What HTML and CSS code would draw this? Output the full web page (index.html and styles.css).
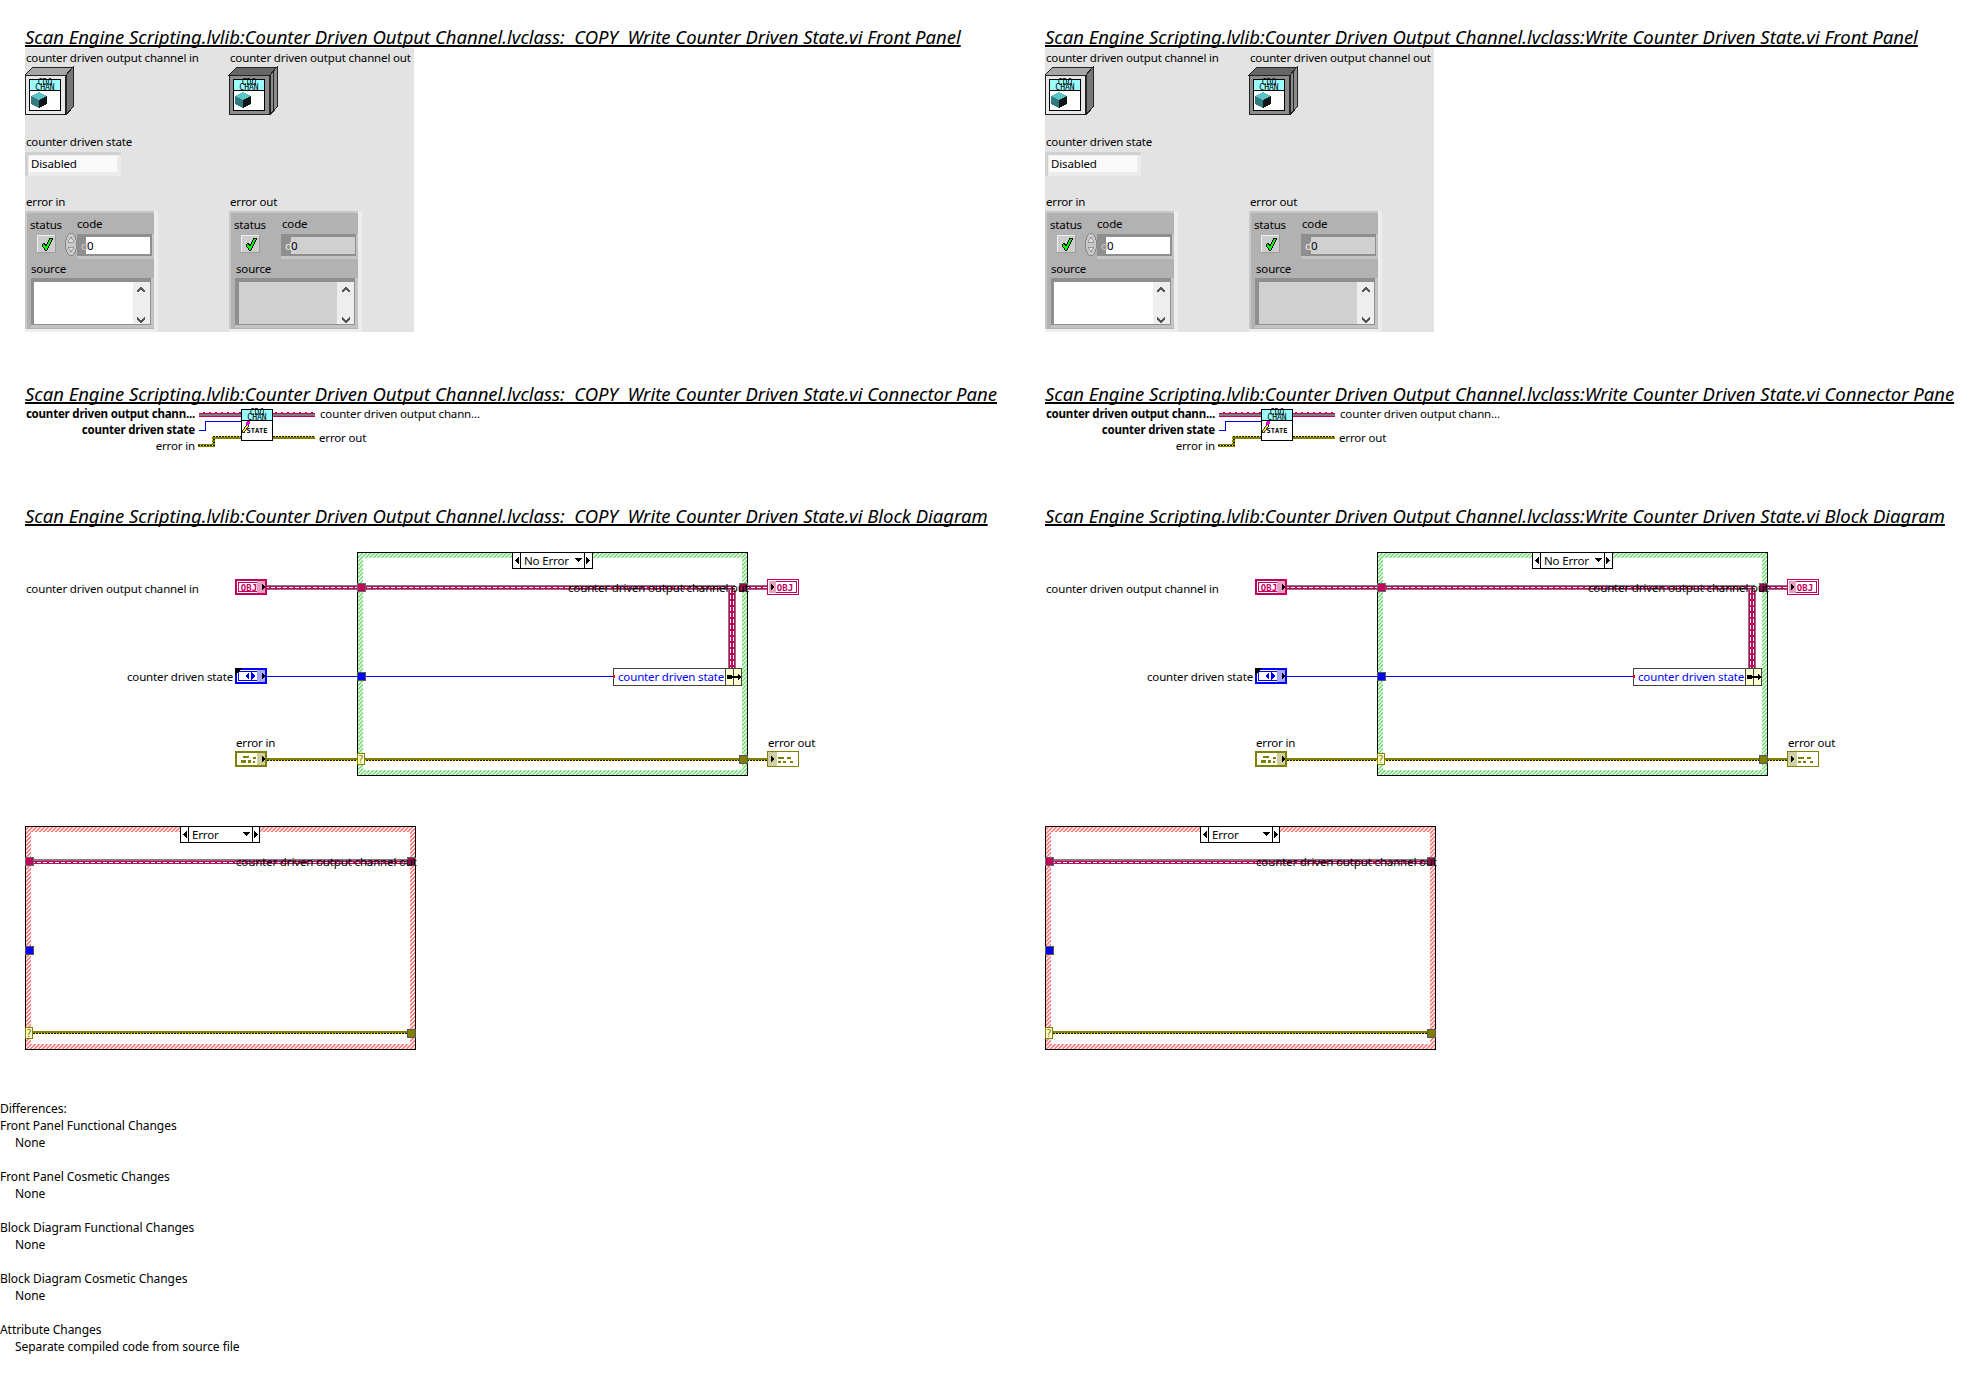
FILE: index.html
```html
<!DOCTYPE html>
<html lang="en">
<head>
<meta charset="utf-8">
<title>VI Comparison Report</title>
<link rel="stylesheet" href="styles.css">
</head>
<body>
<svg class="defs" width="0" height="0" aria-hidden="true">
  <defs>
    <pattern id="hatch-g" width="4" height="4" patternUnits="userSpaceOnUse">
      <rect width="4" height="4" fill="#e4fde4"/>
      <path d="M2 0h2v1h-2zM1 1h2v1h-2zM0 2h2v1h-2zM0 3h1v1h-1zM3 3h1v1h-1z" fill="#80e080"/>
    </pattern>
    <pattern id="hatch-r" width="4" height="4" patternUnits="userSpaceOnUse">
      <rect width="4" height="4" fill="#ffe6e6"/>
      <path d="M2 0h2v1h-2zM1 1h2v1h-2zM0 2h2v1h-2zM0 3h1v1h-1zM3 3h1v1h-1z" fill="#ff7f7f"/>
    </pattern>
    <pattern id="wire-c" width="6" height="5" patternUnits="userSpaceOnUse">
      <rect width="6" height="5" fill="#c4005f"/>
      <rect width="6" height="1" fill="#807b7d"/>
      <rect y="4" width="6" height="1" fill="#807b7d"/>
      <rect x="1" y="2" width="4" height="1" fill="#fff"/>
    </pattern>
    <pattern id="wire-cv" width="8" height="6" patternUnits="userSpaceOnUse">
      <rect width="8" height="6" fill="#c4005f"/>
      <rect width="1" height="6" fill="#807b7d"/>
      <rect x="7" width="1" height="6" fill="#807b7d"/>
      <rect x="2" y="1" width="1" height="4" fill="#fff"/>
      <rect x="5" y="1" width="1" height="4" fill="#fff"/>
    </pattern>
    <pattern id="wire-e" width="3" height="3" patternUnits="userSpaceOnUse">
      <rect width="3" height="3" fill="#808000"/>
      <rect y="1" width="2" height="1" fill="#141400"/>
      <rect x="2" y="1" width="1" height="1" fill="#ffff00"/>
    </pattern>

    <symbol id="chev-up" viewBox="0 0 8 6">
      <path d="M0 5l4-4 4 4" fill="none" stroke="#555" stroke-width="2"/>
    </symbol>
    <symbol id="chev-down" viewBox="0 0 8 6">
      <path d="M0 1l4 4 4-4" fill="none" stroke="#555" stroke-width="2"/>
    </symbol>

    <symbol id="cube" viewBox="31 93 16 16">
      <path d="M39 93l8 4-8 4-8-4z" fill="#5cc4c4"/>
      <path d="M31 97l8 4v8l-8-4z" fill="#2f7b80"/>
      <path d="M39 101l8-4v8l-8 4z" fill="#101818"/>
    </symbol>

    <symbol id="ok-btn" viewBox="0 0 19 18">
      <rect width="19" height="18" fill="#9c9c9c"/>
      <rect width="18" height="17" fill="#eeeeee"/>
      <rect x="1" y="1" width="17" height="16" fill="#cdcdcd"/>
      <path d="M5 10l2-2 2 3 4-8h3l-6 12h-2z" fill="#00ff00" stroke="#000"/>
    </symbol>

    <symbol id="err-base" viewBox="0 0 133 121">
      <rect width="133" height="121" fill="#ededed"/>
      <rect width="129" height="118" fill="#b2b2b2"/>
      <rect width="129" height="2" fill="#c8c8c8"/>
      <rect y="0" width="2" height="118" fill="#c8c8c8"/>
      <rect x="52" y="23" width="77" height="24" fill="#8f8f8f"/>
      <rect x="52" y="45" width="77" height="3" fill="#c4c4c4"/>
      <rect x="127" y="23" width="2" height="24" fill="#c4c4c4"/>
      <rect x="6" y="67" width="123" height="50" fill="#8f8f8f"/>
      <rect x="6" y="114" width="123" height="3" fill="#c4c4c4"/>
      <rect x="126" y="67" width="3" height="50" fill="#c4c4c4"/>
    </symbol>

    <symbol id="fp" viewBox="25 48 389 284">
      <!-- class control -->
      <path d="M25 75l8-8h40l-7 8z" fill="#a6a6a6" stroke="#222"/>
      <path d="M66 75l7-8v40l-7 8z" fill="#777" stroke="#222"/>
      <rect x="25.500" y="75.500" width="40" height="39" fill="#e8e8e8" stroke="#222"/>
      <rect x="29.500" y="79.500" width="31" height="31" fill="#fff" stroke="#000"/>
      <rect x="30" y="80" width="30" height="10" fill="#99ffff"/>
      <rect x="30" y="90" width="30" height="1" fill="#000"/>
      <text class="tiny" x="45" y="85">CDO</text>
      <text class="tiny" x="45" y="90">CHAN</text>
      <use href="#cube" x="31" y="92" width="16" height="16"/>

      <!-- class indicator -->
      <path d="M229 75l8-8h40l-7 8z" fill="#666" stroke="#222"/>
      <path d="M270 75l7-8v40l-7 8z" fill="#8c8c8c" stroke="#222"/>
      <path d="M273 71v40" stroke="#222"/>
      <rect x="229.500" y="75.500" width="40" height="39" fill="#8c8c8c" stroke="#222"/>
      <rect x="233.500" y="79.500" width="31" height="31" fill="#fff" stroke="#000"/>
      <rect x="234" y="80" width="30" height="10" fill="#99ffff"/>
      <rect x="234" y="90" width="30" height="1" fill="#000"/>
      <text class="tiny" x="249" y="85">CDO</text>
      <text class="tiny" x="249" y="90">CHAN</text>
      <use href="#cube" x="235" y="92" width="16" height="16"/>

      <!-- ring -->
      <rect x="25" y="152" width="96" height="24" fill="#ececec"/>
      <rect x="25" y="152" width="96" height="3" fill="#d2d2d2"/>
      <rect x="25" y="152" width="3" height="24" fill="#d2d2d2"/>
      <rect x="29" y="156" width="88" height="16" fill="#fafafa"/>

      <!-- error in -->
      <use href="#err-base" x="25" y="211" width="133" height="121"/>
      <rect x="86" y="237" width="64" height="17" fill="#fff"/>
      <rect x="34" y="282" width="116" height="42" fill="#fff"/>
      <rect x="133" y="282" width="17" height="42" fill="#eeeeee"/>
      <use href="#chev-up" x="137" y="287" width="8" height="6"/>
      <use href="#chev-down" x="137" y="317" width="8" height="6"/>
      <ellipse cx="71" cy="244.500" rx="5.500" ry="11.500" fill="#c8c8c8" stroke="#888"/>
      <path d="M71 237l-3 5h6zM71 252l-3-5h6z" fill="#ddd" stroke="#777" stroke-width=".6"/>
      <use href="#ok-btn" x="37" y="235" width="19" height="18"/>

      <!-- error out -->
      <use href="#err-base" x="229" y="211" width="133" height="121"/>
      <rect x="291" y="237" width="64" height="17" fill="#d0d0d0"/>
      <rect x="239" y="282" width="115" height="42" fill="#d0d0d0"/>
      <rect x="337" y="282" width="17" height="42" fill="#eeeeee"/>
      <use href="#chev-up" x="342" y="287" width="8" height="6"/>
      <use href="#chev-down" x="342" y="317" width="8" height="6"/>
      <use href="#ok-btn" x="241" y="235" width="19" height="18"/>
    </symbol>

    <symbol id="pane" viewBox="25 405 389 98">
      <rect x="199" y="412" width="42" height="5" fill="url(#wire-c)"/>
      <rect x="273" y="412" width="42" height="5" fill="url(#wire-c)"/>
      <path d="M199 430.500h6.500v-9h35.500" fill="none" stroke="#0000e0" stroke-width="1"/>
      <path d="M198 444h14v-8h29v3h-26v8h-17z" fill="url(#wire-e)"/>
      <rect x="273" y="436" width="42" height="3" fill="url(#wire-e)"/>
      <rect x="241.500" y="409.500" width="31" height="31" fill="#fff" stroke="#000"/>
      <rect x="242" y="410" width="30" height="10" fill="#99ffff"/>
      <rect x="242" y="420" width="30" height="1" fill="#000"/>
      <text class="tiny" x="257" y="415">CDO</text>
      <text class="tiny" x="257" y="420">CHAN</text>
      <path d="M242 432l5-8 2 1-5 8z" fill="#ffee44" stroke="#000" stroke-width=".8"/>
      <circle cx="248" cy="423" r="2" fill="#e000d0"/>
      <text class="state" x="257" y="433">STATE</text>
    </symbol>

    <symbol id="t-obj-in" viewBox="0 0 32 16">
      <rect width="32" height="16" fill="#c4005f"/>
      <rect x="2" y="2" width="28" height="12" fill="#fff"/>
      <rect x="3.500" y="3.500" width="22" height="9" fill="#fff" stroke="#c4005f"/>
      <text class="obj" x="14" y="11.500">OBJ</text>
      <rect x="22" y="2" width="8" height="12" fill="#e8a0c0"/>
      <path d="M27 5l3 3-3 3z" fill="#000"/>
    </symbol>
    <symbol id="t-obj-out" viewBox="0 0 32 16">
      <rect x=".5" y=".5" width="31" height="15" fill="#fff" stroke="#c4005f"/>
      <rect x="2.500" y="2.500" width="27" height="11" fill="#fff" stroke="#c4005f"/>
      <text class="obj" x="18" y="11.500">OBJ</text>
      <rect x="2" y="2" width="7" height="12" fill="#e8a0c0"/>
      <path d="M4 5l3 3-3 3z" fill="#000"/>
    </symbol>
    <symbol id="t-enum" viewBox="0 0 32 16">
      <rect width="32" height="16" fill="#0000ff"/>
      <rect x="2" y="2" width="28" height="12" fill="#fff"/>
      <rect x="3.500" y="3.500" width="20" height="9" fill="#fff" stroke="#0000ff"/>
      <path d="M14 4v8l-4-4zM16 4l4 4-4 4z" fill="#0000ff"/>
      <rect x="22" y="2" width="8" height="12" fill="#a8a8f0"/>
      <path d="M27 5l3 3-3 3z" fill="#000"/>
      <path d="M0 0h8l-8 7z" fill="#000"/>
    </symbol>
    <symbol id="t-err-in" viewBox="0 0 32 16">
      <rect width="32" height="16" fill="#808000"/>
      <rect x="2" y="2" width="28" height="12" fill="#fff"/>
      <path d="M8 5h6v2h-6zM6 9h5v3h-5zM13 9h3v3h-3zM18 6h3v2h-3zM18 10h2v2h-2z" fill="#808000"/>
      <rect x="22" y="2" width="8" height="12" fill="#cfcfa0"/>
      <path d="M27 5l3 3-3 3z" fill="#000"/>
    </symbol>
    <symbol id="t-err-out" viewBox="0 0 32 16">
      <rect x=".5" y=".5" width="31" height="15" fill="#fff" stroke="#808000"/>
      <rect x="1" y="1" width="9" height="14" fill="#cfcfa0"/>
      <path d="M4 5l3 3-3 3z" fill="#000"/>
      <path d="M11 6h6v2h-6zM11 10h3v2h-3zM16 10h3v2h-3zM20 6h4v2h-4zM23 10h3v2h-3z" fill="#808000"/>
    </symbol>

    <symbol id="bd" viewBox="25 527 800 533">
      <!-- no error case -->
      <rect x="357.500" y="552.500" width="390" height="223" fill="url(#hatch-g)" stroke="#000"/>
      <rect x="363" y="558" width="379" height="212" fill="#fff"/>

      <rect x="267" y="585" width="468" height="5" fill="url(#wire-c)"/>
      <rect x="748" y="585" width="19" height="5" fill="url(#wire-c)"/>
      <rect x="728" y="590" width="8" height="78" fill="url(#wire-cv)"/>
      <rect x="267" y="676" width="346" height="1" fill="#0000ff"/>
      <rect x="267" y="758" width="472" height="3" fill="url(#wire-e)"/>
      <rect x="748" y="758" width="19" height="3" fill="url(#wire-e)"/>

      <rect x="357.500" y="583.500" width="8" height="8" fill="#c4005f" stroke="#666"/>
      <rect x="739.500" y="583.500" width="8" height="8" fill="#8b0e4b" stroke="#666"/>
      <rect x="357.500" y="672.500" width="8" height="8" fill="#0000ff" stroke="#555"/>
      <rect x="357.500" y="753.500" width="7" height="11" fill="#ffffc8" stroke="#808000"/>
      <text class="q" x="361" y="763">?</text>
      <rect x="739.500" y="755.500" width="8" height="8" fill="#808000" stroke="#555"/>

      <use href="#t-obj-in" x="235" y="579" width="32" height="16"/>
      <use href="#t-enum" x="235" y="668" width="32" height="16"/>
      <use href="#t-err-in" x="235" y="751" width="32" height="16"/>
      <use href="#t-obj-out" x="767" y="579" width="32" height="16"/>
      <use href="#t-err-out" x="767" y="751" width="32" height="16"/>

      <rect x="512.500" y="552.500" width="80" height="16" fill="#fff" stroke="#000"/>
      <path d="M520.500 552v17M584.500 552v17" stroke="#000"/>
      <path d="M519 557v7l-4-3.500zM586 557v7l4-3.500zM575 558h7l-3.500 4z" fill="#000"/>

      <rect x="613.500" y="668.500" width="128" height="17" fill="#fff" stroke="#444"/>
      <rect x="725.500" y="668.500" width="8" height="17" fill="#ffffcc" stroke="#444"/>
      <rect x="733.500" y="668.500" width="8" height="17" fill="#ffffcc" stroke="#444"/>
      <rect x="727" y="675" width="5" height="4" rx="1" fill="#000"/>
      <path d="M732 676h6v-2l3 3-3 3v-2h-6z" fill="#000"/>
      <rect x="613" y="675" width="2" height="3" fill="#ff0000"/>

      <!-- error case -->
      <rect x="25.500" y="826.500" width="390" height="223" fill="url(#hatch-r)" stroke="#000"/>
      <rect x="31" y="832" width="379" height="212" fill="#fff"/>
      <rect x="34" y="859" width="373" height="5" fill="url(#wire-c)"/>
      <rect x="33" y="1031" width="374" height="3" fill="url(#wire-e)"/>
      <rect x="25.500" y="857.500" width="8" height="8" fill="#c4005f" stroke="#666"/>
      <rect x="407.500" y="857.500" width="8" height="8" fill="#8b0e4b" stroke="#666"/>
      <rect x="25.500" y="946.500" width="8" height="8" fill="#0000ff" stroke="#555"/>
      <rect x="25.500" y="1027.500" width="7" height="11" fill="#ffffc8" stroke="#808000"/>
      <text class="q" x="29" y="1037">?</text>
      <rect x="407.500" y="1029.500" width="8" height="8" fill="#808000" stroke="#555"/>
      <rect x="180.500" y="826.500" width="79" height="16" fill="#fff" stroke="#000"/>
      <path d="M188.500 826v17M252.500 826v17" stroke="#000"/>
      <path d="M187 831v7l-4-3.500zM254 831v7l4-3.500zM243 832h7l-3.500 4z" fill="#000"/>
    </symbol>
  </defs>
</svg>

<main class="compare">
  <article class="col">
    <h2 class="title">Scan Engine Scripting.lvlib:Counter Driven Output Channel.lvclass:  COPY  Write Counter Driven State.vi Front Panel</h2>
    <div class="panel">
      <svg class="art"><use href="#fp"/></svg>
      <span class="lbl fp-cin">counter driven output channel in</span>
      <span class="lbl fp-cout">counter driven output channel out</span>
      <span class="lbl fp-state">counter driven state</span>
      <span class="lbl fp-dis">Disabled</span>
      <span class="lbl fp-ein">error in</span>
      <span class="lbl fp-eout">error out</span>
      <span class="lbl fp-s1">status</span>
      <span class="lbl fp-c1">code</span>
      <span class="lbl fp-d1">d</span>
      <span class="lbl fp-z1">0</span>
      <span class="lbl fp-src1">source</span>
      <span class="lbl fp-s2">status</span>
      <span class="lbl fp-c2">code</span>
      <span class="lbl fp-d2">d</span>
      <span class="lbl fp-z2">0</span>
      <span class="lbl fp-src2">source</span>
    </div>
    <h2 class="title title-gap">Scan Engine Scripting.lvlib:Counter Driven Output Channel.lvclass:  COPY  Write Counter Driven State.vi Connector Pane</h2>
    <div class="conn">
      <svg class="art"><use href="#pane"/></svg>
      <span class="lbl cp-l1">counter driven output chann...</span>
      <span class="lbl cp-l2">counter driven state</span>
      <span class="lbl cp-l3">error in</span>
      <span class="lbl cp-r1">counter driven output chann...</span>
      <span class="lbl cp-r2">error out</span>
    </div>
    <h2 class="title">Scan Engine Scripting.lvlib:Counter Driven Output Channel.lvclass:  COPY  Write Counter Driven State.vi Block Diagram</h2>
    <div class="diagram">
      <svg class="art"><use href="#bd"/></svg>
      <span class="lbl bd-cin">counter driven output channel in</span>
      <span class="lbl bd-state">counter driven state</span>
      <span class="lbl bd-ein">error in</span>
      <span class="lbl bd-eout">error out</span>
      <span class="lbl bd-sel1">No Error</span>
      <span class="lbl bd-cout">counter driven output channel out</span>
      <span class="lbl bd-prop">counter driven state</span>
      <span class="lbl bd-sel2">Error</span>
      <span class="lbl bd-cout2">counter driven output channel out</span>
    </div>
  </article>

  <article class="col">
    <h2 class="title">Scan Engine Scripting.lvlib:Counter Driven Output Channel.lvclass:Write Counter Driven State.vi Front Panel</h2>
    <div class="panel">
      <svg class="art"><use href="#fp"/></svg>
      <span class="lbl fp-cin">counter driven output channel in</span>
      <span class="lbl fp-cout">counter driven output channel out</span>
      <span class="lbl fp-state">counter driven state</span>
      <span class="lbl fp-dis">Disabled</span>
      <span class="lbl fp-ein">error in</span>
      <span class="lbl fp-eout">error out</span>
      <span class="lbl fp-s1">status</span>
      <span class="lbl fp-c1">code</span>
      <span class="lbl fp-d1">d</span>
      <span class="lbl fp-z1">0</span>
      <span class="lbl fp-src1">source</span>
      <span class="lbl fp-s2">status</span>
      <span class="lbl fp-c2">code</span>
      <span class="lbl fp-d2">d</span>
      <span class="lbl fp-z2">0</span>
      <span class="lbl fp-src2">source</span>
    </div>
    <h2 class="title title-gap">Scan Engine Scripting.lvlib:Counter Driven Output Channel.lvclass:Write Counter Driven State.vi Connector Pane</h2>
    <div class="conn">
      <svg class="art"><use href="#pane"/></svg>
      <span class="lbl cp-l1">counter driven output chann...</span>
      <span class="lbl cp-l2">counter driven state</span>
      <span class="lbl cp-l3">error in</span>
      <span class="lbl cp-r1">counter driven output chann...</span>
      <span class="lbl cp-r2">error out</span>
    </div>
    <h2 class="title">Scan Engine Scripting.lvlib:Counter Driven Output Channel.lvclass:Write Counter Driven State.vi Block Diagram</h2>
    <div class="diagram">
      <svg class="art"><use href="#bd"/></svg>
      <span class="lbl bd-cin">counter driven output channel in</span>
      <span class="lbl bd-state">counter driven state</span>
      <span class="lbl bd-ein">error in</span>
      <span class="lbl bd-eout">error out</span>
      <span class="lbl bd-sel1">No Error</span>
      <span class="lbl bd-cout">counter driven output channel out</span>
      <span class="lbl bd-prop">counter driven state</span>
      <span class="lbl bd-sel2">Error</span>
      <span class="lbl bd-cout2">counter driven output channel out</span>
    </div>
  </article>
</main>

<section class="notes">
  <p>Differences:</p>
  <div class="group"><p>Front Panel Functional Changes</p><p class="ind">None</p></div>
  <div class="group"><p>Front Panel Cosmetic Changes</p><p class="ind">None</p></div>
  <div class="group"><p>Block Diagram Functional Changes</p><p class="ind">None</p></div>
  <div class="group"><p>Block Diagram Cosmetic Changes</p><p class="ind">None</p></div>
  <div class="group"><p>Attribute Changes</p><p class="ind">Separate compiled code from source file</p></div>
</section>
</body>
</html>
```
FILE: styles.css
```css
* { box-sizing: border-box; }
html, body { margin: 0; padding: 0; background: #fff; }
body { font-family: "Noto Sans", "Open Sans", sans-serif; font-size: 12px; color: #000; overflow-x: hidden; }
.defs { position: absolute; }
.compare { display: grid; grid-template-columns: 1020px 932px; padding: 24px 0 0 25px; }
.col { display: flex; flex-direction: column; min-width: 0; }

.title {
  margin: 0; height: 24px; white-space: pre;
  font-size: 18.5px; font-weight: 400; font-style: italic; line-height: 25px;
  text-decoration: underline; text-decoration-thickness: 2px; text-decoration-skip-ink: none; text-underline-offset: 1px;
  letter-spacing: -.02px;
}
.title-gap { margin-top: 49px; }

.panel { position: relative; width: 389px; height: 284px; background: #e3e3e3; }
.conn { position: relative; width: 389px; height: 98px; }
.diagram { position: relative; width: 800px; height: 533px; }
.art { position: absolute; inset: 0; width: 100%; height: 100%; overflow: visible; shape-rendering: crispEdges; }

.lbl { position: absolute; white-space: pre; line-height: 16px; font-size: 11.5px; letter-spacing: -.15px; }

/* front panel (page coordinate minus 25,48) */
.fp-cin { left: 1px; top: 2px; }
.fp-cout { left: 205px; top: 2px; }
.fp-state { left: 1px; top: 86px; }
.fp-dis { left: 6px; top: 108px; }
.fp-ein { left: 1px; top: 146px; }
.fp-eout { left: 205px; top: 146px; }
.fp-s1 { left: 5px; top: 169px; }
.fp-c1 { left: 52px; top: 168px; }
.fp-d1 { left: 56px; top: 190px; color: #ccc; }
.fp-z1 { left: 62px; top: 190px; }
.fp-src1 { left: 6px; top: 213px; }
.fp-s2 { left: 209px; top: 169px; }
.fp-c2 { left: 257px; top: 168px; }
.fp-d2 { left: 260px; top: 190px; color: #eee; }
.fp-z2 { left: 266px; top: 190px; }
.fp-src2 { left: 211px; top: 213px; }

/* connector pane (page coordinate minus 25,405) */
.cp-l1, .cp-l2, .cp-l3 { right: 219px; text-align: right; }
.cp-l1 { top: 1px; font-weight: 700; letter-spacing: -.2px; }
.cp-l2 { top: 17px; font-weight: 700; letter-spacing: -.2px; }
.cp-l3 { top: 33px; }
.cp-r1 { left: 295px; top: 1px; }
.cp-r2 { left: 294px; top: 25px; }

/* block diagram (page coordinate minus 25,527) */
.bd-cin { left: 1px; top: 54px; }
.bd-state { right: 592px; top: 142px; }
.bd-ein { left: 211px; top: 208px; }
.bd-eout { left: 743px; top: 208px; }
.bd-sel1 { left: 499px; top: 26px; }
.bd-cout { left: 543px; top: 53px; }
.bd-prop { left: 593px; top: 142px; color: #0000ff; }
.bd-sel2 { left: 167px; top: 300px; }
.bd-cout2 { left: 211px; top: 327px; }

.tiny { font: 400 8px "DejaVu Sans Mono", monospace; text-anchor: middle; fill: #000; }
.state { font: 700 7px "DejaVu Sans Mono", monospace; text-anchor: middle; fill: #000; }
.obj { font: 700 9px "DejaVu Sans Mono", monospace; text-anchor: middle; fill: #c4005f; }
.q { font: 400 10px "DejaVu Sans", sans-serif; text-anchor: middle; fill: #808000; }

.notes { padding-top: 40px; line-height: 17px; letter-spacing: -.06px; }
.notes p { margin: 0; }
.group { margin-bottom: 17px; }
.ind { padding-left: 15px; }
```
